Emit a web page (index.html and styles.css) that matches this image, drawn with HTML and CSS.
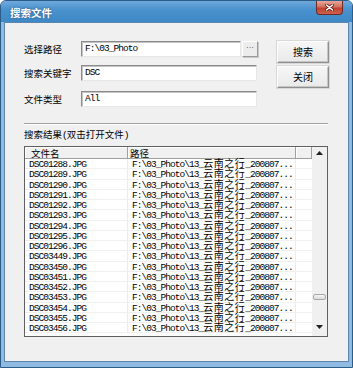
FILE: index.html
```html
<!DOCTYPE html>
<html lang="zh-CN">
  <head>
    <meta charset="UTF-8" />
    <title>搜索文件</title>
    <link rel="stylesheet" href="styles.css">
  </head>
  <body>
    <div class="window">
      <!-- Title bar -->
      <div class="titlebar">
        <span class="title">搜索文件</span>
        <div class="close">
          <svg width="9" height="7" viewBox="0 0 9 7">
            <path d="M1.5 1 L7.5 6 M7.5 1 L1.5 6" stroke="#5a1a12" stroke-width="3" stroke-linecap="round" />
            <path d="M1.5 1 L7.5 6 M7.5 1 L1.5 6" stroke="#ffffff" stroke-width="1.6" stroke-linecap="round" />
          </svg>
        </div>
      </div>

      <div class="frame">
        <div class="client">
          <!-- Search options -->
          <div class="top">
            <div class="fields">
              <div class="field">
                <span class="label">选择路径</span>
                <div class="input mono">F:\03_Photo</div>
                <div class="browse">···</div>
              </div>
              <div class="field second">
                <span class="label">搜索关键字</span>
                <div class="input wide mono">DSC</div>
              </div>
              <div class="field third">
                <span class="label">文件类型</span>
                <div class="input wide mono">All</div>
              </div>
            </div>
            <div class="actions">
              <div class="btn">搜索</div>
              <div class="btn">关闭</div>
            </div>
          </div>

          <div class="sep"></div>
          <div class="results-label">搜索结果<span class="paren">(</span>双击打开文件<span class="paren">)</span></div>

          <!-- Result list -->
          <div class="list">
            <div class="table">
              <div class="header">
                <div class="hcell c1">文件名</div>
                <div class="hcell c2">路径</div>
                <div class="hcell c3"></div>
              </div>
              <div class="row"><span class="c1">DSC01288.JPG</span><span class="c2">F:\03_Photo\13_<span class="cjk">云南之行</span>_200807...</span></div>
              <div class="row"><span class="c1">DSC01289.JPG</span><span class="c2">F:\03_Photo\13_<span class="cjk">云南之行</span>_200807...</span></div>
              <div class="row"><span class="c1">DSC01290.JPG</span><span class="c2">F:\03_Photo\13_<span class="cjk">云南之行</span>_200807...</span></div>
              <div class="row"><span class="c1">DSC01291.JPG</span><span class="c2">F:\03_Photo\13_<span class="cjk">云南之行</span>_200807...</span></div>
              <div class="row"><span class="c1">DSC01292.JPG</span><span class="c2">F:\03_Photo\13_<span class="cjk">云南之行</span>_200807...</span></div>
              <div class="row"><span class="c1">DSC01293.JPG</span><span class="c2">F:\03_Photo\13_<span class="cjk">云南之行</span>_200807...</span></div>
              <div class="row"><span class="c1">DSC01294.JPG</span><span class="c2">F:\03_Photo\13_<span class="cjk">云南之行</span>_200807...</span></div>
              <div class="row"><span class="c1">DSC01295.JPG</span><span class="c2">F:\03_Photo\13_<span class="cjk">云南之行</span>_200807...</span></div>
              <div class="row"><span class="c1">DSC01296.JPG</span><span class="c2">F:\03_Photo\13_<span class="cjk">云南之行</span>_200807...</span></div>
              <div class="row"><span class="c1">DSC03449.JPG</span><span class="c2">F:\03_Photo\13_<span class="cjk">云南之行</span>_200807...</span></div>
              <div class="row"><span class="c1">DSC03450.JPG</span><span class="c2">F:\03_Photo\13_<span class="cjk">云南之行</span>_200807...</span></div>
              <div class="row"><span class="c1">DSC03451.JPG</span><span class="c2">F:\03_Photo\13_<span class="cjk">云南之行</span>_200807...</span></div>
              <div class="row"><span class="c1">DSC03452.JPG</span><span class="c2">F:\03_Photo\13_<span class="cjk">云南之行</span>_200807...</span></div>
              <div class="row"><span class="c1">DSC03453.JPG</span><span class="c2">F:\03_Photo\13_<span class="cjk">云南之行</span>_200807...</span></div>
              <div class="row"><span class="c1">DSC03454.JPG</span><span class="c2">F:\03_Photo\13_<span class="cjk">云南之行</span>_200807...</span></div>
              <div class="row"><span class="c1">DSC03455.JPG</span><span class="c2">F:\03_Photo\13_<span class="cjk">云南之行</span>_200807...</span></div>
              <div class="row"><span class="c1">DSC03456.JPG</span><span class="c2">F:\03_Photo\13_<span class="cjk">云南之行</span>_200807...</span></div>
            </div>

            <!-- Vertical scrollbar -->
            <div class="scroll">
              <div class="arrow">
                <svg width="7" height="4" viewBox="0 0 7 4"><path d="M0 4 L3.5 0 L7 4 Z" fill="#222" /></svg>
              </div>
              <div class="track">
                <div class="thumb"></div>
              </div>
              <div class="arrow">
                <svg width="7" height="4" viewBox="0 0 7 4"><path d="M0 0 L3.5 4 L7 0 Z" fill="#222" /></svg>
              </div>
              <div class="scroll-end"></div>
            </div>
          </div>
        </div>
      </div>
    </div>
  </body>
</html>
```

FILE: styles.css
```css
/* Page */
body {
  margin: 0;
  font-family: "Noto Sans CJK SC", sans-serif;
  color: #000;
  background: #fff;
}

/* Window frame */
.window {
  width: 353px;
  height: 368px;
  box-sizing: border-box;
  border: 1px solid #2c5d88;
  border-radius: 6px 6px 0 0;
  background: #8fbbe2;
  display: flex;
  flex-direction: column;
  overflow: hidden;
}

.titlebar {
  height: 21px;
  flex: none;
  display: flex;
  justify-content: space-between;
  padding: 0 9px;
  background: linear-gradient(#6fa9dc, #4a92ce 40%, #3d88c6);
}

.title {
  font-size: 10.5px;
  font-weight: bold;
  line-height: 12px;
  margin-top: 6px;
  color: #fff;
  text-shadow: 0 0 2px #1d4f7a;
}

.close {
  width: 27px;
  height: 14px;
  box-sizing: border-box;
  border: 1px solid #6b2a22;
  border-top: none;
  border-radius: 0 0 4px 4px;
  background: linear-gradient(#e7a89a, #d2705f 45%, #c2402f 55%, #cc6250);
  display: flex;
  align-items: center;
  justify-content: center;
}

.frame {
  flex: 1;
  display: flex;
  padding: 0 3px 5px;
}

.client {
  flex: 1;
  border: 1px solid #5e86ac;
  background: #f0f0f0;
  padding: 18px 19px 0;
}

/* Option rows */
.top {
  display: flex;
}

.fields {
  width: 234px;
}

.field {
  display: flex;
  align-items: center;
  height: 16px;
}

.field.second {
  margin-top: 8px;
}

.field.third {
  margin-top: 10px;
}

.label {
  width: 57px;
  font-size: 9.5px;
  line-height: 12px;
}

.mono {
  font-family: "Liberation Mono", monospace;
  font-size: 9.5px;
  letter-spacing: -0.95px;
}

.input {
  width: 160px;
  height: 16px;
  box-sizing: border-box;
  background: #fff;
  border: 1px solid;
  border-color: #8a8a8a #e6e6e6 #e6e6e6 #8a8a8a;
  box-shadow: inset 1px 1px 0 #c4c4c4;
  padding-left: 3px;
  line-height: 14px;
}

.input.wide {
  width: 176px;
}

.browse {
  width: 16px;
  height: 16px;
  box-sizing: border-box;
  margin-left: 1px;
  border: 1px solid;
  border-color: #fff #9a9a9a #9a9a9a #fff;
  box-shadow: 1px 1px 0 #c8c8c8;
  background: #ececec;
  font-family: "Liberation Sans", sans-serif;
  font-size: 8px;
  line-height: 12px;
  text-align: center;
  color: #333;
}

.actions {
  margin-left: 19px;
  display: flex;
  flex-direction: column;
  gap: 3px;
}

.btn {
  width: 52px;
  height: 22px;
  box-sizing: border-box;
  border: 1px solid;
  border-color: #fdfdfd #8e8e8e #8e8e8e #fdfdfd;
  box-shadow: inset -1px -1px 0 #c6c6c6, 0 0 0 1px #d8d8d8;
  background: linear-gradient(#f6f6f6, #e9e9e9);
  font-size: 10px;
  line-height: 20px;
  text-align: center;
}

/* Separator and list caption */
.sep {
  width: 304px;
  margin-top: 16px;
  border-top: 1px solid #a0a0a0;
  border-bottom: 1px solid #fff;
}

.results-label {
  margin-top: 3px;
  font-size: 9.5px;
  line-height: 12px;
}

.paren {
  font-family: "Liberation Mono", monospace;
  letter-spacing: -0.95px;
}

/* Result list */
.list {
  width: 304px;
  height: 191px;
  box-sizing: border-box;
  margin-top: 4px;
  border: 1px solid #606060;
  background: #fff;
  display: flex;
}

.table {
  flex: 1;
  overflow: hidden;
}

.header {
  display: flex;
  height: 12px;
  box-sizing: border-box;
  border-bottom: 1px solid #a0a0a0;
  background: #f0f0f0;
}

.hcell {
  box-sizing: border-box;
  border-right: 1px solid #a0a0a0;
  box-shadow: inset 1px 1px 0 #fff;
  font-size: 9.5px;
  line-height: 12px;
  white-space: nowrap;
}

.hcell.c1 {
  width: 103px;
  padding-left: 6px;
}

.hcell.c2 {
  width: 168px;
  padding-left: 2px;
}

.hcell.c3 {
  flex: 1;
}

/* Rows: text may spill a pixel into the next row, as in the original */
.row {
  display: flex;
  height: 10.25px;
  box-sizing: border-box;
  border-bottom: 1px solid #f0f0f0;
  font-family: "Liberation Mono", monospace;
  font-size: 9.5px;
  letter-spacing: -0.95px;
  line-height: 11px;
  white-space: nowrap;
}

.row .c1 {
  width: 103px;
  box-sizing: border-box;
  padding-left: 4px;
  border-right: 1px solid #ececec;
}

.row .c2 {
  width: 168px;
  box-sizing: border-box;
  padding-left: 4px;
  border-right: 1px solid #ececec;
}

.cjk {
  font-family: "Noto Sans CJK SC", sans-serif;
  font-size: 10px;
  letter-spacing: 0.5px;
  line-height: 0;
}

/* Scrollbar */
.scroll {
  width: 15px;
  background: #f0f0f0;
  display: flex;
  flex-direction: column;
}

.arrow {
  height: 12px;
  display: flex;
  align-items: center;
  justify-content: center;
}

.track {
  flex: 1;
}

.thumb {
  height: 6px;
  margin: 135px 1px 0;
  box-sizing: border-box;
  border: 1px solid #a8a8a8;
  border-radius: 2px;
  background: linear-gradient(#f6f6f6, #dadada);
}

.scroll-end {
  height: 3px;
}
```
